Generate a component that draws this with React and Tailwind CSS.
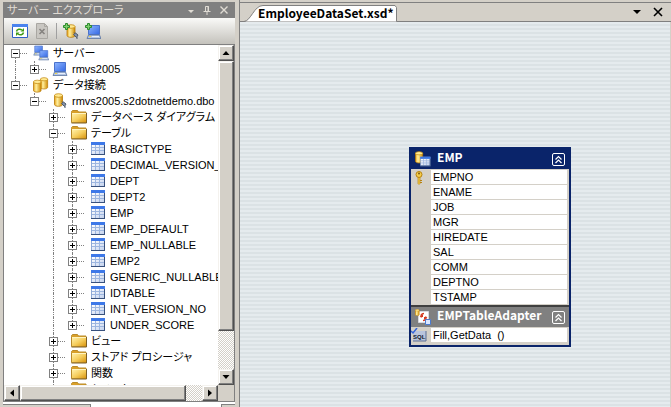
import React from "react";

const nodes = [
  { id: "servers", label: "サーバー", level: 0, icon: "servers", open: true, guides: [], up: false, down: true },
  { id: "rmvs", label: "rmvs2005", level: 1, icon: "server", guides: [true], up: true, down: false },
  { id: "data", label: "データ接続", level: 0, icon: "dbs", open: true, guides: [], up: true, down: false },
  { id: "dbo", label: "rmvs2005.s2dotnetdemo.dbo", level: 1, icon: "db", open: true, guides: [false], up: true, down: false },
  { id: "diagrams", label: "データベース ダイアグラム", level: 2, icon: "folder", guides: [false, false], up: true, down: true },
  { id: "tables", label: "テーブル", level: 2, icon: "folder", open: true, guides: [false, false], up: true, down: true },
  ...[
    "BASICTYPE",
    "DECIMAL_VERSION_",
    "DEPT",
    "DEPT2",
    "EMP",
    "EMP_DEFAULT",
    "EMP_NULLABLE",
    "EMP2",
    "GENERIC_NULLABLE",
    "IDTABLE",
    "INT_VERSION_NO",
    "UNDER_SCORE",
  ].map((label, i) => ({ id: label, label, level: 3, icon: "table", guides: [false, false, true], up: true, down: i < 11 })),
  { id: "views", label: "ビュー", level: 2, icon: "folder", guides: [false, false], up: true, down: true },
  { id: "procs", label: "ストアド プロシージャ", level: 2, icon: "folder", guides: [false, false], up: true, down: true },
  { id: "funcs", label: "関数", level: 2, icon: "folder", guides: [false, false], up: true, down: true },
  { id: "synonyms", label: "シノニム", level: 2, icon: "folder", guides: [false, false], up: true, down: true },
];

const fields = ["EMPNO", "ENAME", "JOB", "MGR", "HIREDATE", "SAL", "COMM", "DEPTNO", "TSTAMP"];

function Gradients() {
  return (
    <svg width="0" height="0" className="absolute" aria-hidden="true">
      <defs>
        <linearGradient id="gold" x1="0" x2="1">
          <stop offset="0" stopColor="#e8a317" />
          <stop offset="0.35" stopColor="#fff0a0" />
          <stop offset="1" stopColor="#d08a00" />
        </linearGradient>
        <linearGradient id="folder" x1="0" y1="0" x2="1" y2="1">
          <stop offset="0" stopColor="#fff0a8" />
          <stop offset="0.5" stopColor="#f5cd5c" />
          <stop offset="1" stopColor="#d8930c" />
        </linearGradient>
        <linearGradient id="screen" x1="0" y1="0" x2="1" y2="1">
          <stop offset="0" stopColor="#8fb6ff" />
          <stop offset="1" stopColor="#3468e4" />
        </linearGradient>
        <linearGradient id="grid" x1="0" y1="0" x2="1" y2="1">
          <stop offset="0" stopColor="#ffffff" />
          <stop offset="1" stopColor="#c3d2ee" />
        </linearGradient>
      </defs>
    </svg>
  );
}

function Computer() {
  return (
    <g>
      <path d="M2.500 1.500h11v9h-11z" fill="url(#screen)" stroke="#4a72cc" />
      <path d="M2.500 11h11l1.500 3.500H1z" fill="#b4c6e4" stroke="#5a739f" strokeWidth="0.800" />
      <path d="M3 12.500h2" stroke="#f6d648" />
      <path d="M6 12.500h7" stroke="#e8effb" />
    </g>
  );
}

function Cylinder() {
  return (
    <g>
      <path d="M0.500 2.500v9c0 2.400 8 2.400 8 0v-9z" fill="url(#gold)" stroke="#b87a08" strokeWidth="0.800" />
      <ellipse cx="4.500" cy="2.500" rx="4" ry="1.800" fill="#ffe991" stroke="#c58b12" strokeWidth="0.800" />
    </g>
  );
}

function Plug() {
  return (
    <g stroke="#4d5a6c" fill="none">
      <path d="M9.500 10.500l2-1.500 2.500 2-1.500 2.500z" fill="#8794a8" />
      <path d="M13 13v2M11 9.500l-1-1" />
    </g>
  );
}

function Plus() {
  return <path d="M2.500 0.500h2v2h2v2h-2v2h-2v-2h-2v-2h2z" fill="#7ed06c" stroke="#2d8a2d" />;
}

function TableGrid() {
  return (
    <g>
      <path d="M1 1h14v13H1z" fill="#8fa9d6" />
      <path d="M1 1h14v3H1z" fill="#3d78e8" />
      <path d="M2 4h12v9H2z" fill="url(#grid)" />
      <path d="M2 6.500h12M2 9.500h12M5.500 4v9M9.500 4v9" stroke="#9db6e0" />
      <path d="M1 13.500h14M14.500 4v10" stroke="#38517d" />
    </g>
  );
}

function Icon({ name }) {
  return (
    <svg width="16" height="16" viewBox="0 0 16 16" className="shrink-0" aria-hidden="true">
      {name === "server" && <Computer />}
      {name === "servers" && (
        <g>
          <g transform="scale(0.700)"><Computer /></g>
          <g transform="translate(5 4.500) scale(0.720)"><Computer /></g>
        </g>
      )}
      {name === "db" && (
        <g><g transform="translate(2 0)"><Cylinder /></g><Plug /></g>
      )}
      {name === "dbs" && (
        <g>
          <g transform="translate(7 0) scale(0.900)"><Cylinder /></g>
          <g transform="translate(0 2.500) scale(0.950)"><Cylinder /></g>
        </g>
      )}
      {name === "folder" && (
        <g>
          <path d="M0.500 3.500v-1l1-1h5l1 1.500h7.500v10.500H0.500z" fill="#d9a02a" stroke="#b98a2a" />
          <path d="M1 5h14v8.500H1z" fill="url(#folder)" />
          <path d="M0.500 14h15V4" stroke="#7d5f24" fill="none" />
          <path d="M1 4.500h14" stroke="#fff4c0" />
        </g>
      )}
      {name === "table" && <TableGrid />}
      {name === "refresh" && (
        <g>
          <path d="M0.500 1.500h15v13H0.500z" fill="#fff" stroke="#2f5fc6" />
          <path d="M0 1h16v3H0z" fill="#4a83ee" />
          <path d="M4.500 8.500c0.500-2.500 3.500-3 5.500-1.500M11.500 9.500c-0.500 2.500-3.500 3-5.500 1.500" stroke="#3f9a14" strokeWidth="1.500" fill="none" />
          <path d="M8.500 8.500h3.500V5zM7.500 9.500H4v3.500z" fill="#3f9a14" />
        </g>
      )}
      {name === "delete" && (
        <g>
          <path d="M2.500 0.500h8l3 3v12h-11z" fill="#c9c7c2" stroke="#a9a7a2" />
          <path d="M10.500 0.500v3h3" fill="none" stroke="#a9a7a2" />
          <path d="M5.500 6l5 5M10.500 6l-5 5" stroke="#85837f" strokeWidth="1.600" />
        </g>
      )}
      {name === "adddb" && (
        <g>
          <g transform="translate(3.500 1)"><Cylinder /></g>
          <g transform="translate(1 1)"><Plug /></g>
          <Plus />
        </g>
      )}
      {name === "addserver" && (
        <g>
          <g transform="translate(1 1)"><Computer /></g>
          <Plus />
        </g>
      )}
      {name === "entity" && (
        <g>
          <g transform="scale(0.900)"><Cylinder /></g>
          <g transform="translate(4.500 5) scale(0.730)"><TableGrid /></g>
        </g>
      )}
      {name === "adapter" && (
        <g>
          <path d="M3.500 2.500h10v11h-10z" fill="#fff" stroke="#d8d8e0" />
          <g transform="scale(0.500)"><Cylinder /></g>
          <path d="M9 4.500c-3 0-3.500 2-2.500 4M8 11.500c3 0 3.500-2 2.500-4" fill="none" stroke="#d43a20" strokeWidth="1.400" />
          <path d="M4.500 8h3.500v-3zM12.500 8H9v3z" fill="#d43a20" />
          <path d="M10.500 10.500h5v5h-5z" fill="#dce8ff" stroke="#4a7ad0" />
        </g>
      )}
      {name === "key" && (
        <g>
          <circle cx="8" cy="4.500" r="3" fill="#f4cc4a" stroke="#b8820e" />
          <circle cx="8" cy="3.500" r="1" fill="#7a5a10" />
          <path d="M7 7.500h2v6l-1 1-1-1z" fill="#f4cc4a" stroke="#b8820e" strokeWidth="0.700" />
          <path d="M9 10.500h2M9 12.500h2" stroke="#b8820e" />
        </g>
      )}
    </svg>
  );
}

function Cell({ up, down, across, children }) {
  return (
    <span className="relative flex h-4 w-[19px] shrink-0 items-center justify-center">
      {up && <span className="absolute top-0 left-[9px] h-2 border-l border-dotted border-[#808080]" />}
      {down && <span className="absolute bottom-0 left-[9px] h-2 border-l border-dotted border-[#808080]" />}
      {across && <span className="absolute top-2 left-[9px] w-3 border-t border-dotted border-[#808080]" />}
      {children}
    </span>
  );
}

function TreeRow({ node }) {
  return (
    <li className="flex h-4 items-center">
      {node.guides.map((g, i) => (
        <Cell key={i} up={i === 2 || g} down={i === 2 || g} />
      ))}
      <Cell up={node.up} down={node.down} across>
        <button
          aria-label={node.label}
          aria-expanded={Boolean(node.open)}
          className="relative flex size-[9px] items-center justify-center border border-[#808080] bg-white"
        >
          <span className="absolute h-px w-[5px] bg-black" />
          {!node.open && <span className="absolute h-[5px] w-px bg-black" />}
        </button>
      </Cell>
      <span className="w-2 shrink-0" />
      <Icon name={node.icon} />
      <span className="pl-1 whitespace-nowrap">{node.label}</span>
    </li>
  );
}

const raised =
  "flex items-center justify-center border border-t-[#f4f2ee] border-l-[#f4f2ee] border-r-[#505050] border-b-[#505050] bg-[#d4d0c8] shadow-[inset_-1px_-1px_0_#808080,inset_1px_1px_0_#ffffff]";
const track = "bg-[repeating-conic-gradient(#ffffff_0_25%,#d4d0c8_0_50%)] bg-[size:2px_2px]";
const heading = "font-['Noto_Sans_CJK_JP',sans-serif] text-[12px] leading-4 font-bold";

function Arrow({ d }) {
  return (
    <svg width="8" height="8" viewBox="0 0 8 8" aria-hidden="true">
      <path d={d} fill="#000" />
    </svg>
  );
}

function ServerExplorer() {
  return (
    <aside className="flex w-[235px] shrink-0 flex-col pt-0.5 pl-[3px]">
      <header className="flex h-4 shrink-0 items-center bg-[#808080] pr-1.5 pl-1 text-[#e0dcd4]">
        <h1 className="flex-1">サーバー エクスプローラ</h1>
        <div className="flex gap-2">
          <button aria-label="Menu">
            <svg width="8" height="10" viewBox="0 0 8 10"><path d="M1 5h6L4 8z" fill="currentColor" /></svg>
          </button>
          <button aria-label="Auto hide">
            <svg width="8" height="10" viewBox="0 0 8 10" fill="none" stroke="currentColor"><path d="M2.500 6V1.500h3V6M5 1v5M0.500 6.500h7M4 7v3" /></svg>
          </button>
          <button aria-label="Close">
            <svg width="10" height="10" viewBox="0 0 10 10" fill="none" stroke="currentColor"><path d="M1.500 1.500l7 7M8.500 1.500l-7 7" strokeWidth="1.400" /></svg>
          </button>
        </div>
      </header>
      <div className="flex h-[27px] shrink-0 items-center gap-1.5 border-b border-l border-[#808080] bg-linear-to-b from-[#fafaf8] to-[#c4c2bc] pl-2">
        <button aria-label="Refresh"><Icon name="refresh" /></button>
        <button aria-label="Stop" disabled><Icon name="delete" /></button>
        <span className="h-4 w-px bg-[#a0a0a0]" />
        <button aria-label="Connect to database"><Icon name="adddb" /></button>
        <button aria-label="Connect to server"><Icon name="addserver" /></button>
      </div>
      <div className="grid min-h-0 flex-1 grid-cols-[minmax(0,1fr)_16px] grid-rows-[minmax(0,1fr)_16px] border-r border-b border-l border-[#808080]">
        <ul className="min-h-0 overflow-hidden bg-white pl-0.5">
          {nodes.map((n) => (
            <TreeRow key={n.id} node={n} />
          ))}
        </ul>
        <div className={`flex min-h-0 flex-col ${track}`}>
          <button aria-label="Up" className={`h-4 shrink-0 ${raised}`}><Arrow d="M0.500 6h7L4 2z" /></button>
          <div className={`h-[270px] shrink ${raised}`} />
          <div className="flex-1" />
          <button aria-label="Down" className={`h-4 shrink-0 ${raised}`}><Arrow d="M0.500 2h7L4 6z" /></button>
        </div>
        <div className={`flex ${track}`}>
          <button aria-label="Left" className={`w-4 shrink-0 ${raised}`}><Arrow d="M6 0.500v7L2 4z" /></button>
          <div className={`w-[166px] shrink ${raised}`} />
          <div className="flex-1" />
          <button aria-label="Right" className={`w-4 shrink-0 ${raised}`}><Arrow d="M2 0.500v7L6 4z" /></button>
        </div>
        <div className="bg-[#d4d0c8]" />
      </div>
      <div className="flex h-[5px] shrink-0 border-t-2 border-white">
        <div className="w-[88px] border-t border-r border-[#808080]" />
        <div className="flex-1 bg-white" />
        <div className="w-3.5 border-t border-l border-[#808080]" />
      </div>
    </aside>
  );
}

function Collapse() {
  return (
    <button aria-label="Collapse" className="flex size-[13px] items-center justify-center rounded-xs border border-white">
      <svg width="9" height="9" viewBox="0 0 9 9" fill="none" stroke="#fff" aria-hidden="true">
        <path d="M1.500 4.500l3-3 3 3M1.500 8l3-3 3 3" strokeWidth="1.200" />
      </svg>
    </button>
  );
}

function EntityCard() {
  return (
    <section className="absolute top-[125px] left-[169px] w-[162px] border-2 border-[#0a246a] bg-[#d4d0c8]">
      <header className="flex h-5 items-center gap-1.5 bg-[#0a246a] pr-1 pl-1 text-white">
        <Icon name="entity" />
        <h2 className={`flex-1 pb-1 ${heading}`}>EMP</h2>
        <Collapse />
      </header>
      <ul className="pt-px pr-0.5 leading-[14px]">
        {fields.map((f, i) => (
          <li key={f} className="flex h-[15px]">
            <span className="flex w-5 shrink-0 items-center">{i === 0 && <Icon name="key" />}</span>
            <span className="flex flex-1 items-center border-b border-[#d4d0c8] bg-white pl-0.5">{f}</span>
          </li>
        ))}
      </ul>
      <header className="flex h-[22px] items-center gap-1.5 border-t-2 border-[#404040] bg-[#808080] pr-1 pl-1 text-white">
        <Icon name="adapter" />
        <h3 className={`flex-1 pb-1 ${heading}`}>EMPTableAdapter</h3>
        <Collapse />
      </header>
      <div className="flex h-[18px] pt-px pr-0.5 pb-[3px] leading-[14px]">
        <span className="flex w-5 shrink-0 items-center">
          <svg width="16" height="14" viewBox="0 0 16 14" className="shrink-0" aria-hidden="true">
            <path d="M2 3h13v10H2z" fill="#b9c4dc" />
            <path d="M2 13h13V3" stroke="#5c6e92" fill="none" />
            <text x="2" y="10.500" fontSize="6" fontWeight="bold" fontFamily="Liberation Sans, sans-serif" fill="#101828">SQL</text>
            <path d="M0 3l2 2 4-5" stroke="#3465d8" strokeWidth="1.500" fill="none" />
          </svg>
        </span>
        <span className="flex flex-1 items-center bg-white pl-0.5 whitespace-pre">Fill,GetData  ()</span>
      </div>
    </section>
  );
}

function Designer() {
  return (
    <main className="ml-1 flex min-w-0 flex-1 flex-col border-l border-[#808080] pt-0.5">
      <div className="flex h-5 shrink-0 border-t border-b border-[#808080]">
        <div className="relative ml-1 flex h-[19px] w-[153px] items-center">
          <svg width="153" height="17" viewBox="0 0 153 17" className="absolute top-0.5 left-0" aria-hidden="true">
            <path d="M0 16.500C7 16 10 0.500 19 0.500h132l1.500 2v14" fill="#fff" />
            <path d="M0 16.500C7 16 10 0.500 19 0.500h132l1.500 2v14" fill="none" stroke="#808080" />
          </svg>
          <h2 className={`relative pl-[14px] ${heading}`}>EmployeeDataSet.xsd*</h2>
        </div>
        <div className="flex-1" />
        <div className="flex items-center gap-3 pr-2">
          <button aria-label="Open files"><Arrow d="M0 2h8L4 6z" /></button>
          <button aria-label="Close">
            <svg width="10" height="10" viewBox="0 0 10 10" stroke="#000" aria-hidden="true"><path d="M1 1l8 8M9 1l-8 8" strokeWidth="1.600" /></svg>
          </button>
        </div>
      </div>
      <div className="relative flex-1 overflow-hidden border-r border-[#d4d0c8] bg-[repeating-linear-gradient(#e5ebee_0_2px,#dbe2e5_2px_4px)]">
        <EntityCard />
      </div>
    </main>
  );
}

export default function App() {
  return (
    <div className="flex h-screen overflow-hidden bg-[#d4d0c8] font-['Liberation_Sans','Noto_Sans_CJK_JP',sans-serif] text-[11px] leading-4 text-black [font-feature-settings:'palt']">
      <Gradients />
      <ServerExplorer />
      <Designer />
    </div>
  );
}
